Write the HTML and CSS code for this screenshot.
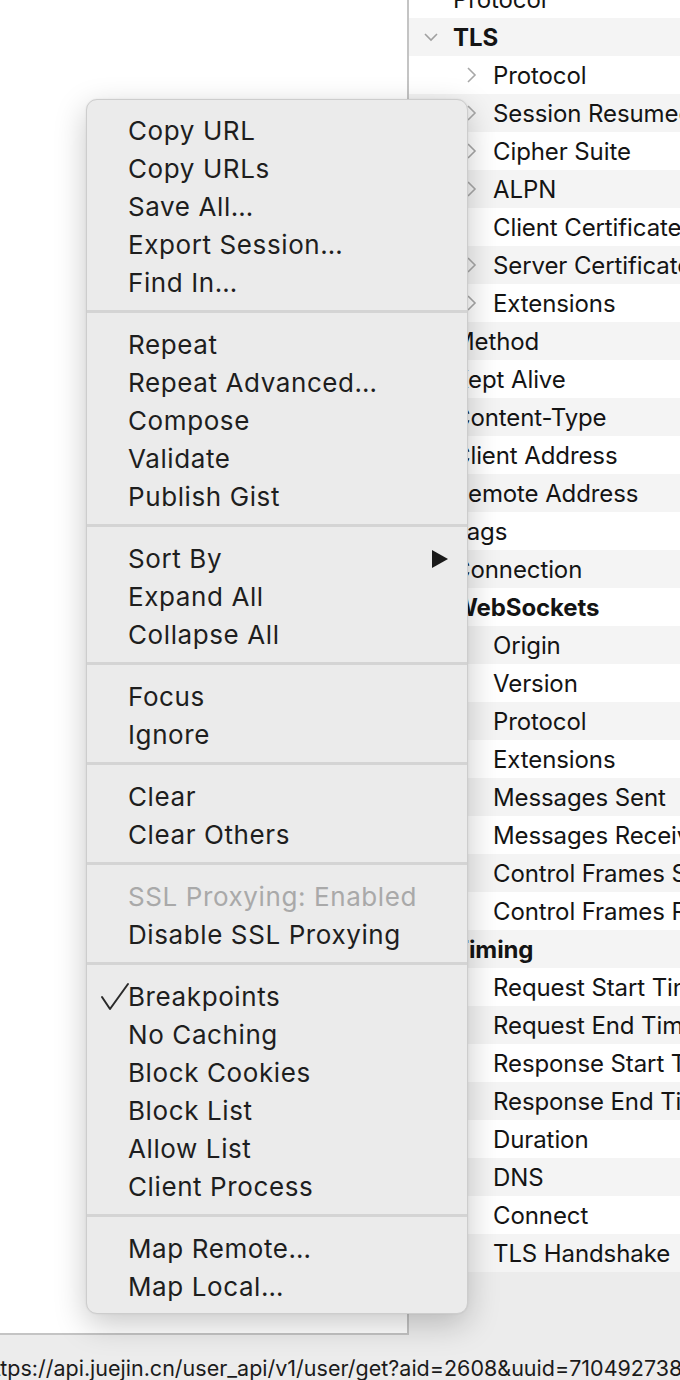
FILE: index.html
```html
<!DOCTYPE html>
<html>
<head>
<meta charset="utf-8">
<link rel="stylesheet" href="styles.css">
</head>
<body>
<div class="app">
  <div class="main">
    <div class="left-pane"></div>
    <div class="tree">
      <div class="row l1"><span class="tw"></span><span class="lbl">Protocol</span></div>
      <div class="row l1"><span class="tw"><svg class="chev-down" width="14" height="10" viewBox="0 0 14 10"><polyline points="1,2 7,8 13,2"/></svg></span><span class="lbl b">TLS</span></div>
      <div class="row l2"><span class="tw"><svg class="chev-right" width="12" height="16" viewBox="0 0 12 16"><polyline points="2,1 9,8 2,15"/></svg></span><span class="lbl">Protocol</span></div>
      <div class="row l2"><span class="tw"><svg class="chev-right" width="12" height="16" viewBox="0 0 12 16"><polyline points="2,1 9,8 2,15"/></svg></span><span class="lbl">Session Resumed</span></div>
      <div class="row l2"><span class="tw"><svg class="chev-right" width="12" height="16" viewBox="0 0 12 16"><polyline points="2,1 9,8 2,15"/></svg></span><span class="lbl">Cipher Suite</span></div>
      <div class="row l2"><span class="tw"><svg class="chev-right" width="12" height="16" viewBox="0 0 12 16"><polyline points="2,1 9,8 2,15"/></svg></span><span class="lbl">ALPN</span></div>
      <div class="row l2"><span class="tw"></span><span class="lbl">Client Certificates</span></div>
      <div class="row l2"><span class="tw"><svg class="chev-right" width="12" height="16" viewBox="0 0 12 16"><polyline points="2,1 9,8 2,15"/></svg></span><span class="lbl">Server Certificates</span></div>
      <div class="row l2"><span class="tw"><svg class="chev-right" width="12" height="16" viewBox="0 0 12 16"><polyline points="2,1 9,8 2,15"/></svg></span><span class="lbl">Extensions</span></div>
      <div class="row l1"><span class="tw"></span><span class="lbl">Method</span></div>
      <div class="row l1"><span class="tw"></span><span class="lbl">Kept Alive</span></div>
      <div class="row l1"><span class="tw"></span><span class="lbl">Content-Type</span></div>
      <div class="row l1"><span class="tw"></span><span class="lbl">Client Address</span></div>
      <div class="row l1"><span class="tw"></span><span class="lbl">Remote Address</span></div>
      <div class="row l1"><span class="tw"></span><span class="lbl">Tags</span></div>
      <div class="row l1"><span class="tw"></span><span class="lbl">Connection</span></div>
      <div class="row l1"><span class="tw"></span><span class="lbl b">WebSockets</span></div>
      <div class="row l2"><span class="tw"></span><span class="lbl">Origin</span></div>
      <div class="row l2"><span class="tw"></span><span class="lbl">Version</span></div>
      <div class="row l2"><span class="tw"></span><span class="lbl">Protocol</span></div>
      <div class="row l2"><span class="tw"></span><span class="lbl">Extensions</span></div>
      <div class="row l2"><span class="tw"></span><span class="lbl">Messages Sent</span></div>
      <div class="row l2"><span class="tw"></span><span class="lbl">Messages Received</span></div>
      <div class="row l2"><span class="tw"></span><span class="lbl">Control Frames Sent</span></div>
      <div class="row l2"><span class="tw"></span><span class="lbl">Control Frames Received</span></div>
      <div class="row l1"><span class="tw"></span><span class="lbl b">Timing</span></div>
      <div class="row l2"><span class="tw"></span><span class="lbl">Request Start Time</span></div>
      <div class="row l2"><span class="tw"></span><span class="lbl">Request End Time</span></div>
      <div class="row l2"><span class="tw"></span><span class="lbl">Response Start Time</span></div>
      <div class="row l2"><span class="tw"></span><span class="lbl">Response End Time</span></div>
      <div class="row l2"><span class="tw"></span><span class="lbl">Duration</span></div>
      <div class="row l2"><span class="tw"></span><span class="lbl">DNS</span></div>
      <div class="row l2"><span class="tw"></span><span class="lbl">Connect</span></div>
      <div class="row l2"><span class="tw"></span><span class="lbl">TLS Handshake</span></div>
    </div>
  </div>
  <div class="status">https://api.juejin.cn/user_api/v1/user/get?aid=2608&amp;uuid=7104927389</div>

  <div class="menu">
    <div class="group">
      <div class="item">Copy URL</div>
      <div class="item">Copy URLs</div>
      <div class="item">Save All…</div>
      <div class="item">Export Session…</div>
      <div class="item">Find In…</div>
    </div>
    <div class="sep"></div>
    <div class="group">
      <div class="item">Repeat</div>
      <div class="item">Repeat Advanced…</div>
      <div class="item">Compose</div>
      <div class="item">Validate</div>
      <div class="item">Publish Gist</div>
    </div>
    <div class="sep"></div>
    <div class="group">
      <div class="item sub">Sort By<svg class="arrow" width="16" height="18" viewBox="0 0 16 18"><polygon points="0,0 16,9 0,18"/></svg></div>
      <div class="item">Expand All</div>
      <div class="item">Collapse All</div>
    </div>
    <div class="sep"></div>
    <div class="group">
      <div class="item">Focus</div>
      <div class="item">Ignore</div>
    </div>
    <div class="sep"></div>
    <div class="group">
      <div class="item">Clear</div>
      <div class="item">Clear Others</div>
    </div>
    <div class="sep"></div>
    <div class="group">
      <div class="item disabled">SSL Proxying: Enabled</div>
      <div class="item">Disable SSL Proxying</div>
    </div>
    <div class="sep"></div>
    <div class="group">
      <div class="item checked"><svg class="check" width="30" height="30" viewBox="0 0 30 30"><polyline points="2,15 10,27 28,2"/></svg>Breakpoints</div>
      <div class="item">No Caching</div>
      <div class="item">Block Cookies</div>
      <div class="item">Block List</div>
      <div class="item">Allow List</div>
      <div class="item">Client Process</div>
    </div>
    <div class="sep"></div>
    <div class="group">
      <div class="item">Map Remote…</div>
      <div class="item">Map Local…</div>
    </div>
  </div>
</div>
</body>
</html>
```
FILE: styles.css
```css
html, body {
  margin: 0;
  padding: 0;
}
body {
  background: #ececec;
  font-family: Inter, "Liberation Sans", sans-serif;
  color: #1b1b1b;
  width: 680px;
  height: 1380px;
  overflow: hidden;
}
.app {
  position: relative;
  width: 680px;
  height: 1380px;
  overflow: hidden;
}
.main {
  display: flex;
  height: 1335px;
}
.left-pane {
  width: 407px;
  height: 1333px;
  background: #ffffff;
  border-right: 2px solid #c4c4c4;
  border-bottom: 2px solid #c4c4c4;
  flex: none;
}
.tree {
  flex: 1;
  margin-top: -20px;
  overflow: hidden;
}
.row {
  display: flex;
  align-items: center;
  height: 38px;
  font-size: 24px;
  letter-spacing: -0.1px;
  white-space: nowrap;
  background: #ffffff;
  color: #141414;
}
.row:nth-child(even) {
  background: #f4f4f4;
}
.row.l1 {
  padding-left: 12px;
}
.row.l2 {
  padding-left: 52px;
}
.tw {
  width: 32px;
  flex: none;
  display: flex;
  align-items: center;
}
.chev-down {
  margin-left: 3px;
  fill: none;
  stroke: #a0a0a0;
  stroke-width: 1.6;
}
.chev-right {
  margin-left: 5px;
  fill: none;
  stroke: #a8a8a8;
  stroke-width: 1.6;
}
.lbl.b {
  font-weight: 700;
}
.status {
  height: 45px;
  line-height: 45px;
  font-size: 21.5px;
  white-space: nowrap;
  text-indent: -19px;
  color: #1b1b1b;
  position: relative;
  top: 11px;
}
.menu {
  position: absolute;
  left: 86px;
  top: 99px;
  width: 380px;
  padding: 12px 0 7px;
  background: #ebebeb;
  border: 1px solid #cdcdcd;
  border-radius: 11px;
  box-shadow: 0 10px 32px rgba(0, 0, 0, 0.22), 0 0 2px rgba(0, 0, 0, 0.08);
}
.item {
  position: relative;
  height: 38px;
  line-height: 38px;
  font-size: 26px;
  letter-spacing: 0.6px;
  padding-left: 41px;
  white-space: nowrap;
  color: #1e1e1e;
}
.item.disabled {
  color: #a9a9a9;
}
.sep {
  height: 3px;
  margin: 8px 0 13px;
  background: #d4d4d4;
}
.arrow {
  position: absolute;
  left: 345px;
  top: 10px;
  fill: #1a1a1a;
}
.check {
  position: absolute;
  left: 13px;
  top: 4px;
  fill: none;
  stroke: #2a2a2a;
  stroke-width: 2;
  stroke-linecap: round;
  stroke-linejoin: round;
}
```
